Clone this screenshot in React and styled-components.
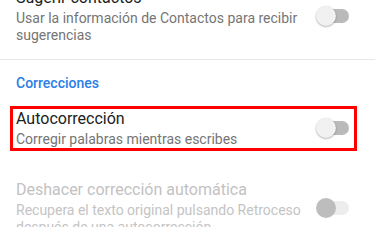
import React from "react";
import styled, { createGlobalStyle } from "styled-components";

const GlobalStyle = createGlobalStyle`
  html, body {
    margin: 0;
    padding: 0;
    background: #ffffff;
  }
  body {
    font-family: Roboto, "Noto Sans", Arial, sans-serif;
    -webkit-font-smoothing: antialiased;
  }
`;

const Screen = styled.div`
  width: 375px;
  height: 227px;
  overflow: hidden;
  background: #fff;
`;

// the list is scrolled, so the first title is half above the top edge
const List = styled.div`
  margin-top: -26px;
`;

const Item = styled.div`
  display: flex;
  align-items: center;
  padding: ${(p) => p.$pad || "14px 26px 14.5px 16px"};
`;

const Highlight = styled.div`
  flex: 1;
  display: flex;
  align-items: center;
  border: 3px solid #ff0000;
  padding: 0 5px 0 3px;
`;

const TextBlock = styled.div`
  flex: 1;
  min-width: 0;
  padding-right: 6px;
`;

const Title = styled.div`
  font-size: 16px;
  line-height: 20px;
  color: ${(p) => (p.$disabled ? "#c2c2c2" : "#212121")};
`;

const Summary = styled.div`
  margin-top: 2px;
  font-size: 14px;
  line-height: 17px;
  color: ${(p) => (p.$disabled ? "#c4c4c4" : "#757575")};
`;

const Divider = styled.div`
  height: 1px;
  background: #e8e8e8;
`;

const Category = styled.div`
  padding: 13px 16px 0;
  font-size: 14px;
  line-height: 20px;
  font-weight: 500;
  color: #2b7de9;
`;

const SwitchBox = styled.div`
  position: relative;
  width: 33px;
  height: 20px;
  flex-shrink: 0;
`;

const Track = styled.div`
  position: absolute;
  left: 3px;
  right: 0;
  top: 3px;
  height: 14px;
  border-radius: 7px;
  background: ${(p) => (p.$disabled ? "#ededed" : "#bababa")};
`;

const Thumb = styled.div`
  position: absolute;
  left: 0;
  top: 0;
  width: 20px;
  height: 20px;
  border-radius: 50%;
  background: ${(p) => (p.$disabled ? "#bdbdbd" : "#f1f1f1")};
  box-shadow: ${(p) =>
    p.$disabled ? "none" : "0 1px 2px rgba(0, 0, 0, 0.28), 0 0 1px rgba(0, 0, 0, 0.12)"};
`;

const Switch = ({ disabled }) => (
  <SwitchBox>
    <Track $disabled={disabled} />
    <Thumb $disabled={disabled} />
  </SwitchBox>
);

const Pref = ({ title, summary, disabled }) => (
  <>
    <TextBlock>
      <Title $disabled={disabled}>{title}</Title>
      <Summary $disabled={disabled}>{summary}</Summary>
    </TextBlock>
    <Switch disabled={disabled} />
  </>
);

export default function App() {
  return (
    <Screen>
      <GlobalStyle />
      <List>
        <Item>
          <Pref
            title="Sugerir contactos"
            summary="Usar la información de Contactos para recibir sugerencias"
          />
        </Item>
        <Divider />
        <Category>Correcciones</Category>
        <Item $pad="13px 18px 15px 10px">
          <Highlight>
            <Pref
              title="Autocorrección"
              summary="Corregir palabras mientras escribes"
            />
          </Highlight>
        </Item>
        <Item $pad="14px 26px 14px 16px">
          <Pref
            disabled
            title="Deshacer corrección automática"
            summary="Recupera el texto original pulsando Retroceso después de una autocorrección"
          />
        </Item>
      </List>
    </Screen>
  );
}
